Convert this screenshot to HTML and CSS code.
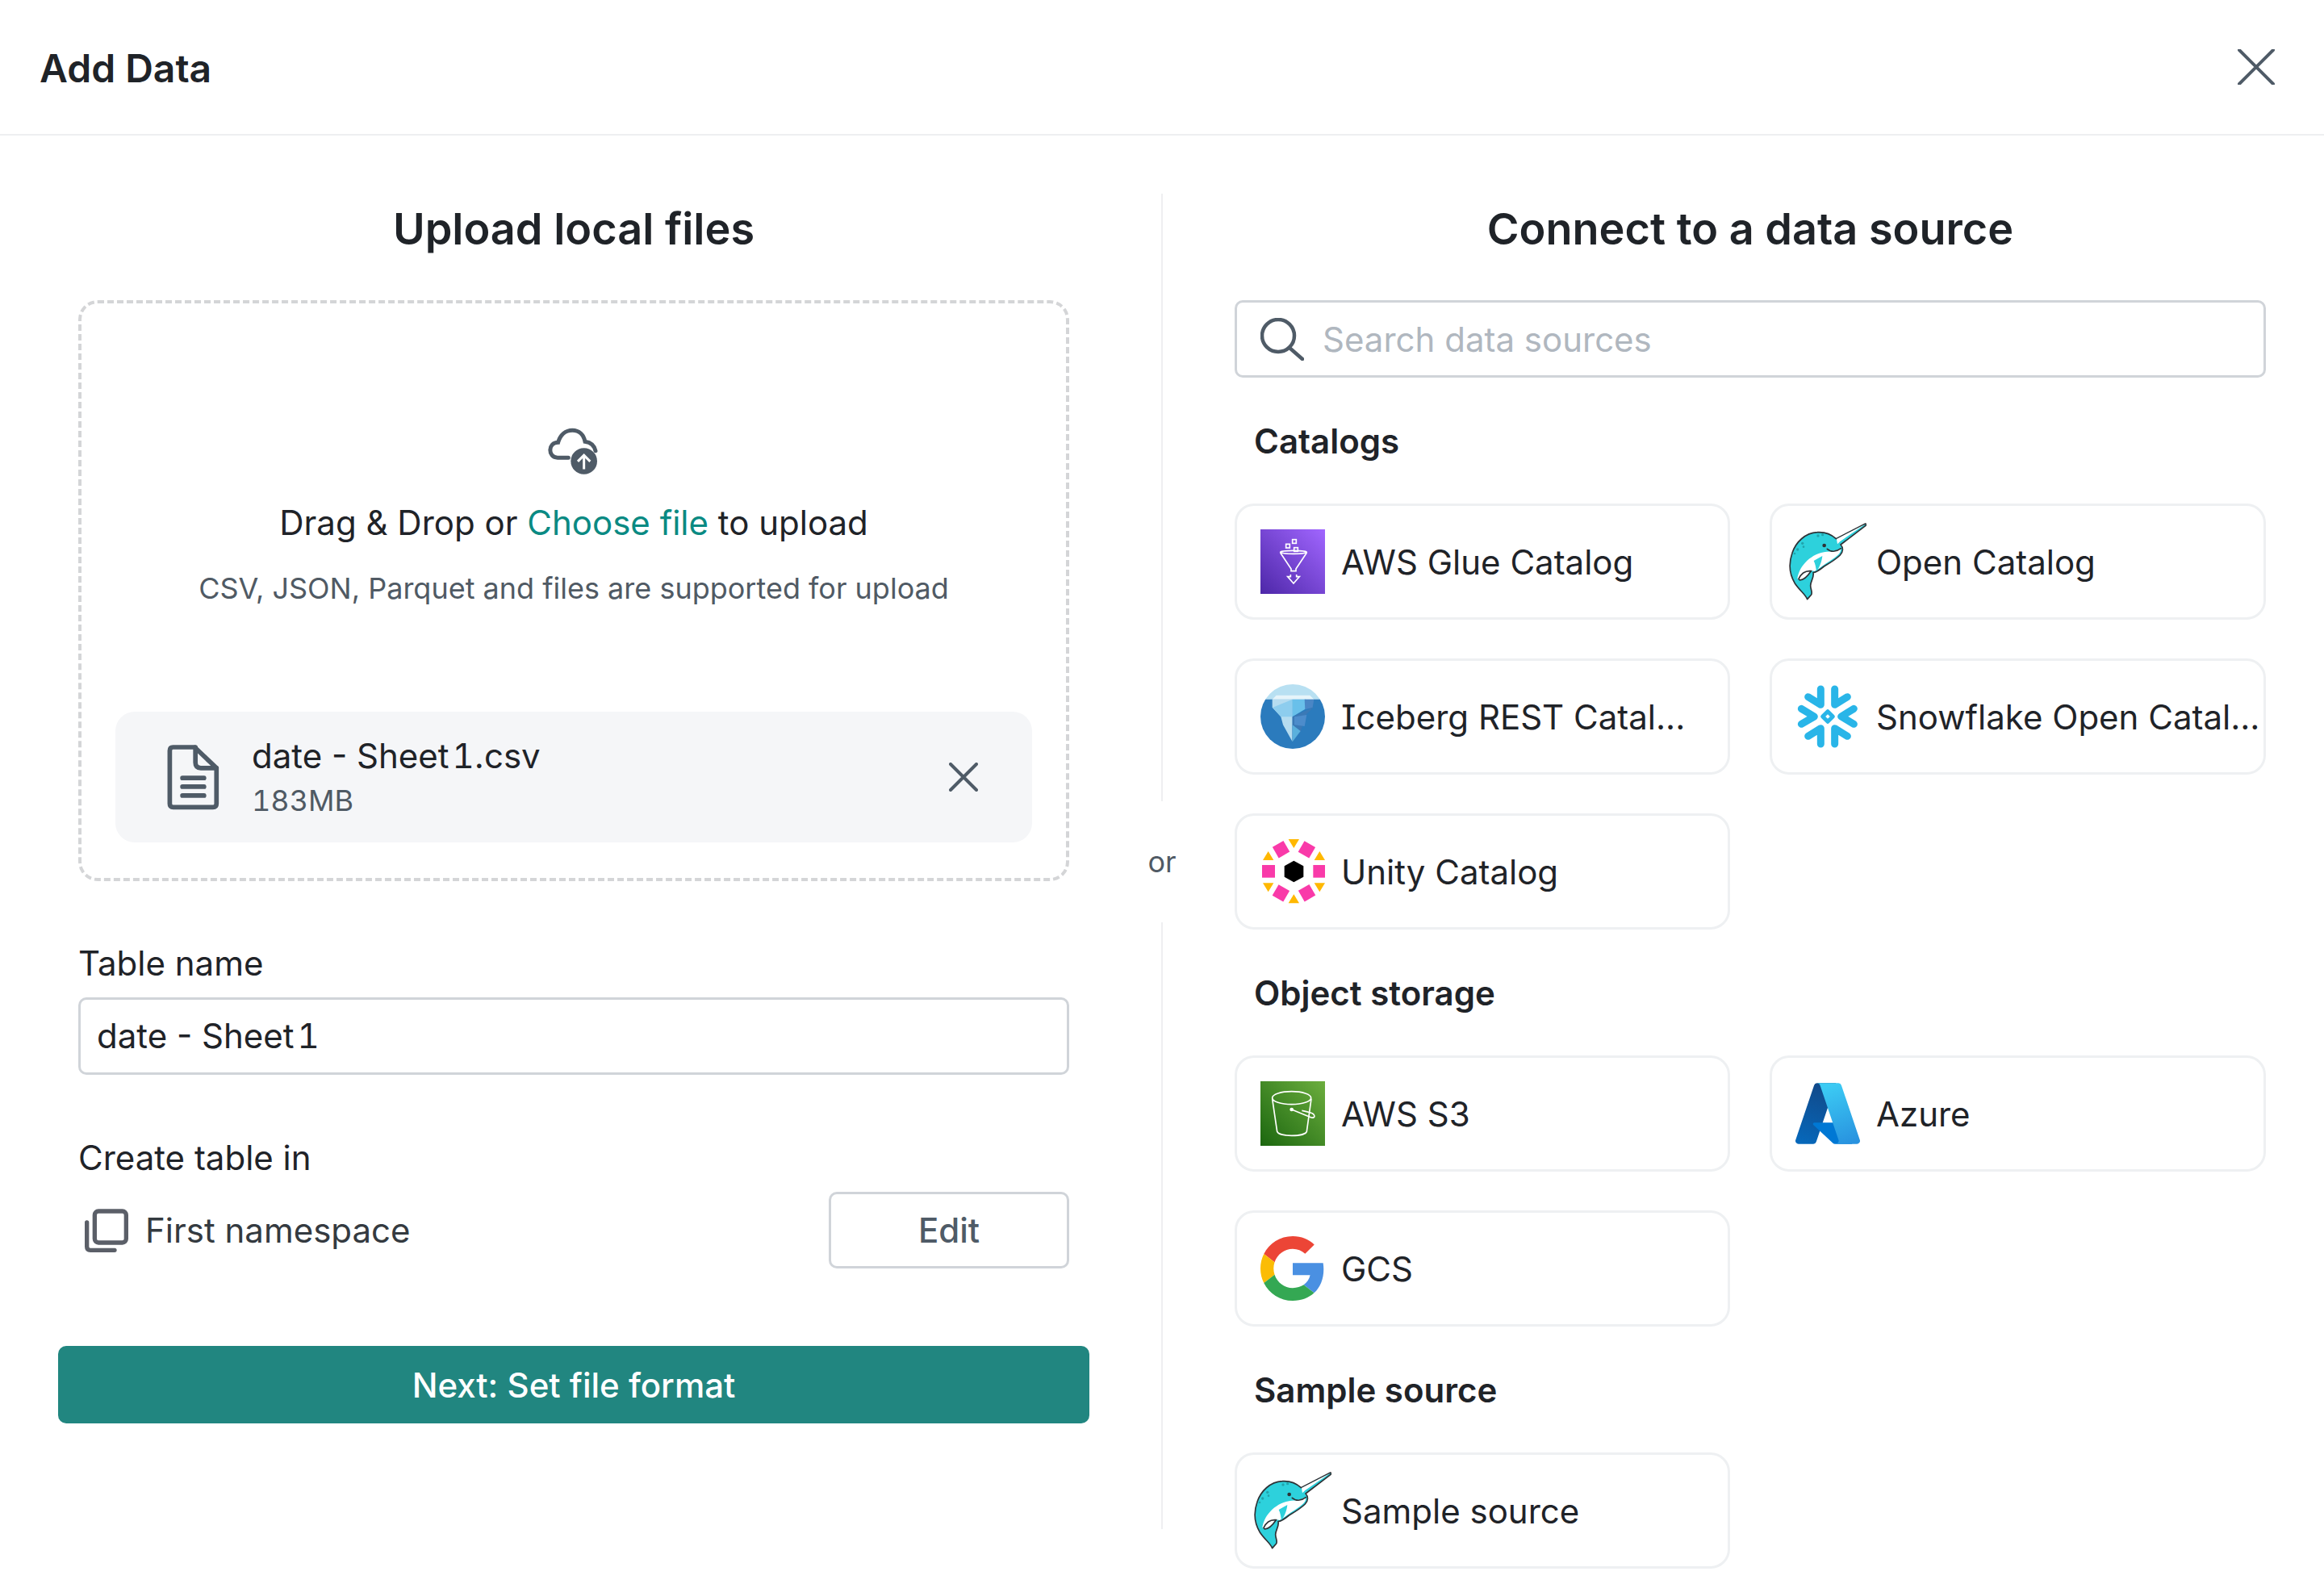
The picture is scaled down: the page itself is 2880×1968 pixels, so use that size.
FILE: index.html
```html
<!DOCTYPE html>
<html lang="en">

<head>
    <meta charset="UTF-8">
    <title>Add Data</title>
    <link rel="stylesheet" href="styles.css">
</head>

<body>
    <header class="top">
        <h1>Add Data</h1>
        <svg class="close" viewBox="0 0 46 44"><path d="M2 1 L44 43 M44 1 L2 43"/></svg>
    </header>

    <main class="main">
        <section class="upload">
            <h2>Upload local files</h2>
            <div class="drop">
                <svg class="cloud" viewBox="110 80 210 200">
                    <path class="cloud-line" d="M195 200 H155 C118 200 118 143 157 143 C165 115 185 98 210 98 C235 98 252 115 257 140 C278 143 292 155 296 175"/>
                    <circle cx="253" cy="213" r="49" fill="#4f5b67"/>
                    <path class="cloud-arrow" d="M253 243 V193 M230 214 L253 191 L276 214"/>
                </svg>
                <p class="drag">Drag &amp; Drop or <a>Choose file</a> to upload</p>
                <p class="hint">CSV, JSON, Parquet and files are supported for upload</p>
                <div class="file">
                    <svg class="file-icon" viewBox="80 60 200 260">
                        <path d="M105 78 H185 L266 155 V287 Q266 300 253 300 H106 Q93 300 93 287 V91 Q93 78 105 78 Z"/>
                        <path d="M188 78 V135 Q188 155 208 155 H266"/>
                        <path d="M140 192 H220 M140 224 H220 M140 257 H220"/>
                    </svg>
                    <div class="file-text">
                        <div class="file-name">date - Sheet<span class="one">1</span>.csv</div>
                        <div class="file-size num">183MB</div>
                    </div>
                    <svg class="file-x" viewBox="0 0 36 36"><path d="M2 2 L34 34 M34 2 L2 34"/></svg>
                </div>
            </div>

            <label class="field-label first">Table name</label>
            <div class="text-input">date - Sheet<span class="one">1</span></div>

            <label class="field-label second">Create table in</label>
            <div class="namespace">
                <svg class="ns-icon" viewBox="70 100 180 180">
                    <rect x="113" y="118" width="117" height="117" rx="14"/>
                    <path d="M84 160 V250 Q84 263 97 263 H187"/>
                </svg>
                <span class="ns-name">First namespace</span>
                <button class="edit">Edit</button>
            </div>

            <button class="next">Next: Set file format</button>
        </section>

        <div class="divider">
            <div class="line"></div>
            <div class="or">or</div>
            <div class="line"></div>
        </div>

        <section class="sources">
            <h2>Connect to a data source</h2>
            <div class="search">
                <svg class="search-icon" viewBox="0 0 54 53">
                    <circle cx="22" cy="22" r="20"/>
                    <path d="M36 37 L52 51"/>
                </svg>
                <input type="text" placeholder="Search data sources">
            </div>

            <h3 class="group-title">Catalogs</h3>
            <div class="cards">
                <div class="card">
                    <div class="logo">
                        <svg viewBox="186 108 240 240">
                            <defs>
                                <linearGradient id="glue" x1="0" y1="1" x2="1" y2="0">
                                    <stop offset="0" stop-color="#4d27a8"/>
                                    <stop offset="1" stop-color="#a166ff"/>
                                </linearGradient>
                            </defs>
                            <rect x="186" y="108" width="240" height="240" fill="url(#glue)"/>
                            <g fill="none" stroke="#fff" stroke-width="5">
                                <rect x="305" y="146" width="14" height="14"/>
                                <rect x="281" y="163" width="14" height="14"/>
                                <rect x="311" y="176" width="14" height="14"/>
                                <ellipse cx="309" cy="193" rx="49" ry="6"/>
                                <path d="M260 195 L300 255 V263 H318 V255 L358 195"/>
                                <path d="M298 276 V284 H287 L309 309 L331 284 H320 V276"/>
                            </g>
                        </svg>
                    </div>
                    <span class="card-name">AWS Glue Catalog</span>
                </div>
                <div class="card">
                    <div class="logo">
                        <svg class="narwhal" viewBox="110 83 288 288">
                            <path fill="#2dd1dc" stroke="#2e3236" stroke-width="5" stroke-linejoin="round" d="M285 142 L394 86 Q400 88 395 93 L302 164 C312 175 312 190 300 203 C285 218 262 232 240 245 C228 255 215 265 200 268 C204 285 190 300 190 316 C190 330 198 340 193 350 L178 367 C172 350 150 335 132 308 C112 275 108 235 122 195 C135 155 170 120 215 118 C245 116 270 128 285 142 Z"/>
                            <path fill="#fff" d="M141 290 C148 240 195 195 250 190 C268 190 285 186 302 178 C305 195 290 205 262 225 C240 238 225 252 205 263 C185 258 165 268 150 295 Z"/>
                            <path fill="#2dd1dc" d="M202 224 L234 206 C232 225 226 245 212 263 C210 250 208 235 202 224 Z"/>
                            <path fill="#fff" stroke="#2e3236" stroke-width="5" d="M146 291 C155 272 172 260 192 262 C180 280 165 295 150 296 Z"/>
                            <path fill="none" stroke="#2e3236" stroke-width="5" stroke-linecap="round" d="M252 180 C265 192 285 192 303 178"/>
                            <path fill="#fff" d="M287 143 L392 89 L300 152 L290 162 Z"/>
                            <circle cx="241" cy="167" r="7" fill="#2e3236"/>
                            <g fill="#22a3ac">
                                <circle cx="218" cy="131" r="5"/>
                                <circle cx="235" cy="127" r="5"/>
                                <circle cx="160" cy="159" r="5"/>
                                <circle cx="164" cy="172" r="4"/>
                                <circle cx="142" cy="182" r="5"/>
                                <circle cx="131" cy="197" r="4"/>
                            </g>
                        </svg>
                    </div>
                    <span class="card-name">Open Catalog</span>
                </div>
                <div class="card">
                    <div class="logo">
                        <svg viewBox="186 84 240 240">
                            <clipPath id="round"><circle cx="306" cy="204" r="120"/></clipPath>
                            <g clip-path="url(#round)">
                                <rect x="186" y="84" width="240" height="56" fill="#b8e0f2"/>
                                <rect x="186" y="140" width="240" height="184" fill="#2b7bbd"/>
                                <path fill="#e6f4fa" d="M245 125 H370 L385 140 H230 Z"/>
                                <path fill="#b5dcf0" d="M230 140 H305 V298 L270 235 L262 205 L230 170 Z"/>
                                <path fill="#8dcdee" d="M232 170 L305 140 V205 L262 205 Z"/>
                                <path fill="#69c0ea" d="M305 140 H355 V175 L305 205 Z"/>
                                <path fill="#4a86c5" d="M350 140 H385 L380 170 L352 178 Z"/>
                                <path fill="#3b79b6" d="M305 205 L385 168 L355 198 L335 260 L305 298 Z"/>
                                <path fill="#4d8ccb" d="M312 205 L358 198 L350 240 L312 235 Z"/>
                                <path fill="#5ab0dd" d="M305 235 L335 258 L305 298 Z"/>
                            </g>
                        </svg>
                    </div>
                    <span class="card-name">Iceberg REST Catal...</span>
                </div>
                <div class="card">
                    <div class="logo">
                        <svg viewBox="135 84 240 240">
                            <g fill="none" stroke="#29b5e8" stroke-width="27" stroke-linecap="round" stroke-linejoin="round">
                                <path d="M229 102 V160 L182 131"/>
                                <path d="M281 102 V160 L328 131"/>
                                <path d="M229 306 V248 L182 277"/>
                                <path d="M281 306 V248 L328 277"/>
                                <path d="M157 175 L205 204 L157 232"/>
                                <path d="M352 175 L305 204 L352 232"/>
                            </g>
                            <path fill="none" stroke="#29b5e8" stroke-width="15" stroke-linejoin="round" d="M255 185 L274 204 L255 223 L236 204 Z"/>
                        </svg>
                    </div>
                    <span class="card-name">Snowflake Open Catal...</span>
                </div>
                <div class="card">
                    <div class="logo">
                        <svg viewBox="186 657 240 240">
                            <g fill="#f93aa9">
                                <rect x="192" y="753" width="48" height="47"/>
                                <rect x="382" y="753" width="48" height="47"/>
                                <rect x="239" y="672" width="47" height="47" transform="rotate(-30 262 695)"/>
                                <rect x="335" y="672" width="47" height="47" transform="rotate(30 358 695)"/>
                                <rect x="239" y="834" width="47" height="47" transform="rotate(30 262 857)"/>
                                <rect x="335" y="834" width="47" height="47" transform="rotate(-30 358 857)"/>
                            </g>
                            <g fill="#ffb800">
                                <path d="M290 657 H330 L310 690 Z"/>
                                <path d="M290 895 H330 L310 862 Z"/>
                                <path d="M195 735 H235 L215 702 Z"/>
                                <path d="M386 735 H426 L406 702 Z"/>
                                <path d="M195 820 H235 L215 853 Z"/>
                                <path d="M386 820 H426 L406 853 Z"/>
                            </g>
                            <path d="M310 737 L346 757 V797 L310 817 L275 797 V757 Z"/>
                        </svg>
                    </div>
                    <span class="card-name">Unity Catalog</span>
                </div>
            </div>

            <h3 class="group-title">Object storage</h3>
            <div class="cards">
                <div class="card">
                    <div class="logo">
                        <svg viewBox="186 90 240 240">
                            <defs>
                                <linearGradient id="s3" x1="0" y1="1" x2="1" y2="0">
                                    <stop offset="0" stop-color="#1b660f"/>
                                    <stop offset="1" stop-color="#6cae3e"/>
                                </linearGradient>
                            </defs>
                            <rect x="186" y="90" width="240" height="240" fill="url(#s3)"/>
                            <g fill="none" stroke="#fff" stroke-width="5">
                                <ellipse cx="302" cy="152" rx="72" ry="24"/>
                                <path d="M230 155 L248 277 C255 297 350 297 358 277 L375 155"/>
                                <path d="M302 195 L375 225 C392 228 390 212 372 207 C362 204 345 199 340 199"/>
                            </g>
                            <circle cx="302" cy="195" r="7" fill="#fff"/>
                        </svg>
                    </div>
                    <span class="card-name">AWS S3</span>
                </div>
                <div class="card">
                    <div class="logo">
                        <svg viewBox="4 4 88 88">
                            <defs>
                                <linearGradient id="az-a" x1="42.83" y1="12.69" x2="15.79" y2="92.57" gradientUnits="userSpaceOnUse">
                                    <stop offset="0" stop-color="#114a8b"/>
                                    <stop offset="1" stop-color="#0669bc"/>
                                </linearGradient>
                                <linearGradient id="az-b" x1="47.84" y1="10.36" x2="77.52" y2="89.44" gradientUnits="userSpaceOnUse">
                                    <stop offset="0" stop-color="#3ccbf4"/>
                                    <stop offset="1" stop-color="#2892df"/>
                                </linearGradient>
                            </defs>
                            <path fill="url(#az-a)" d="M33.338 6.544h26.038l-27.03 80.087a4.152 4.152 0 0 1-3.933 2.824H8.149a4.145 4.145 0 0 1-3.928-5.47L29.404 9.368a4.152 4.152 0 0 1 3.934-2.825z"/>
                            <path fill="#0078d4" d="M71.175 60.261h-41.29a1.911 1.911 0 0 0-1.305 3.309l26.532 24.764a4.171 4.171 0 0 0 2.846 1.121h23.38z"/>
                            <path fill="url(#az-b)" d="M66.595 9.364a4.145 4.145 0 0 0-3.928-2.82H33.648a4.146 4.146 0 0 1 3.928 2.82l25.184 74.62a4.146 4.146 0 0 1-3.928 5.472h29.02a4.146 4.146 0 0 0 3.927-5.472z"/>
                        </svg>
                    </div>
                    <span class="card-name">Azure</span>
                </div>
                <div class="card">
                    <div class="logo">
                        <svg viewBox="0 0 48 48">
                            <path fill="#ec4536" d="M24 9.5c3.54 0 6.71 1.22 9.21 3.6l6.85-6.85C35.9 2.38 30.47 0 24 0 14.62 0 6.51 5.38 2.56 13.22l7.98 6.19C12.43 13.72 17.74 9.5 24 9.5z"/>
                            <path fill="#4a90e2" d="M46.98 24.55c0-1.57-.15-3.09-.38-4.55H24v9.02h12.94c-.58 2.96-2.26 5.48-4.78 7.18l7.73 6c4.51-4.18 7.09-10.36 7.09-17.65z"/>
                            <path fill="#fbbc05" d="M10.53 28.59c-.48-1.45-.76-2.99-.76-4.59s.27-3.14.76-4.59l-7.98-6.19C.92 16.46 0 20.12 0 24c0 3.88.92 7.54 2.56 10.78l7.97-6.19z"/>
                            <path fill="#34a853" d="M24 48c6.48 0 11.93-2.13 15.89-5.81l-7.73-6c-2.15 1.45-4.92 2.3-8.16 2.3-6.26 0-11.57-4.22-13.47-9.91l-7.98 6.19C6.51 42.62 14.62 48 24 48z"/>
                        </svg>
                    </div>
                    <span class="card-name">GCS</span>
                </div>
            </div>

            <h3 class="group-title">Sample source</h3>
            <div class="cards">
                <div class="card">
                    <div class="logo">
                        <svg class="narwhal" viewBox="110 83 288 288">
                            <path fill="#2dd1dc" stroke="#2e3236" stroke-width="5" stroke-linejoin="round" d="M285 142 L394 86 Q400 88 395 93 L302 164 C312 175 312 190 300 203 C285 218 262 232 240 245 C228 255 215 265 200 268 C204 285 190 300 190 316 C190 330 198 340 193 350 L178 367 C172 350 150 335 132 308 C112 275 108 235 122 195 C135 155 170 120 215 118 C245 116 270 128 285 142 Z"/>
                            <path fill="#fff" d="M141 290 C148 240 195 195 250 190 C268 190 285 186 302 178 C305 195 290 205 262 225 C240 238 225 252 205 263 C185 258 165 268 150 295 Z"/>
                            <path fill="#2dd1dc" d="M202 224 L234 206 C232 225 226 245 212 263 C210 250 208 235 202 224 Z"/>
                            <path fill="#fff" stroke="#2e3236" stroke-width="5" d="M146 291 C155 272 172 260 192 262 C180 280 165 295 150 296 Z"/>
                            <path fill="none" stroke="#2e3236" stroke-width="5" stroke-linecap="round" d="M252 180 C265 192 285 192 303 178"/>
                            <path fill="#fff" d="M287 143 L392 89 L300 152 L290 162 Z"/>
                            <circle cx="241" cy="167" r="7" fill="#2e3236"/>
                            <g fill="#22a3ac">
                                <circle cx="218" cy="131" r="5"/>
                                <circle cx="235" cy="127" r="5"/>
                                <circle cx="160" cy="159" r="5"/>
                                <circle cx="164" cy="172" r="4"/>
                                <circle cx="142" cy="182" r="5"/>
                                <circle cx="131" cy="197" r="4"/>
                            </g>
                        </svg>
                    </div>
                    <span class="card-name">Sample source</span>
                </div>
            </div>
        </section>
    </main>
</body>

</html>
```
FILE: styles.css
```css
* {
    box-sizing: border-box;
}

body {
    margin: 0;
    background: #fff;
    color: #1f2328;
    font-family: Inter, "Noto Sans", sans-serif;
    font-feature-settings: "cv08";
    overflow: hidden;
}

h1,
h2,
h3,
p {
    margin: 0;
}

.num {
    font-variant-numeric: tabular-nums;
}

.one {
    margin-left: 4px;
    font-variant-numeric: tabular-nums;
}

.top {
    height: 168px;
    padding: 0 61px 0 49px;
    border-bottom: 2px solid #eeeff1;
    display: flex;
    align-items: center;
    justify-content: space-between;
}

.top h1 {
    margin-top: 2px;
    font-size: 48px;
    font-weight: 600;
}

.close {
    width: 46px;
    height: 44px;
    fill: none;
    stroke: #4f5b67;
    stroke-width: 4;
    stroke-linecap: round;
}

.main {
    display: flex;
    padding: 72px 72px 0 72px;
}

.upload {
    width: 1278px;
    display: flex;
    flex-direction: column;
    align-items: stretch;
}

.sources {
    width: 1278px;
}

h2 {
    height: 88px;
    line-height: 88px;
    margin-bottom: 44px;
    font-size: 54px;
    font-weight: 600;
    text-align: center;
}

.drop {
    margin: 0 25px;
    height: 720px;
    padding: 151px 42px 0;
    border: 4px dashed #d4d5d7;
    border-radius: 24px;
    text-align: center;
}

.cloud {
    display: block;
    width: 70px;
    height: 67px;
    margin: 0 auto;
    overflow: visible;
}

.cloud-line {
    fill: none;
    stroke: #4f5b67;
    stroke-width: 15;
    stroke-linecap: round;
}

.cloud-arrow {
    fill: none;
    stroke: #fff;
    stroke-width: 9;
}

.drag {
    margin-top: 21px;
    line-height: 66px;
    font-size: 42px;
}

.drag a {
    color: #0a8a83;
}

.hint {
    margin-top: 20px;
    line-height: 56px;
    font-size: 36px;
    color: #505a64;
}

.file {
    margin-top: 125px;
    height: 162px;
    padding: 0 67px 0 63px;
    background: #f5f6f8;
    border-radius: 24px;
    display: flex;
    align-items: center;
    text-align: left;
}

.file-icon {
    width: 67px;
    height: 87px;
    margin-right: 39px;
    fill: none;
    stroke: #4f5b67;
    stroke-width: 17;
    stroke-linecap: round;
    stroke-linejoin: round;
}

.file-text {
    flex: 1;
}

.file-name {
    line-height: 56px;
    font-size: 42px;
}

.file-size {
    margin-top: 1px;
    line-height: 52px;
    font-size: 36px;
    color: #505a64;
}

.file-x {
    width: 36px;
    height: 36px;
    fill: none;
    stroke: #4f5b67;
    stroke-width: 4;
    stroke-linecap: round;
}

.field-label {
    display: block;
    margin: 0 25px;
    line-height: 60px;
    font-size: 42px;
}

.field-label.first {
    margin-top: 72px;
    margin-bottom: 12px;
}

.field-label.second {
    margin-top: 73px;
    margin-bottom: 12px;
}

.text-input,
.search {
    height: 96px;
    border: 3px solid #d0d4d9;
    border-radius: 10px;
    background: #fff;
}

.text-input {
    margin: 0 25px;
    padding: 0 20px;
    line-height: 90px;
    font-size: 42px;
}

.namespace {
    margin: 0 25px;
    height: 95px;
    display: flex;
    align-items: center;
}

.ns-icon {
    width: 60px;
    height: 60px;
    margin: 0 17px 0 6px;
    fill: none;
    stroke: #5b5f68;
    stroke-width: 16;
    stroke-linecap: round;
}

.ns-name {
    flex: 1;
    font-size: 42px;
    color: #343a40;
}

.edit {
    width: 298px;
    height: 95px;
    border: 3px solid #d0d4d9;
    border-radius: 10px;
    background: #fff;
    color: #4f5b67;
    font: 500 42px Inter, "Noto Sans", sans-serif;
}

.next {
    margin-top: 96px;
    height: 96px;
    border: 0;
    border-radius: 10px;
    background: #218680;
    color: #fff;
    font: 500 42px Inter, "Noto Sans", sans-serif;
}

.divider {
    width: 180px;
    height: 1655px;
    display: flex;
    flex-direction: column;
    align-items: center;
}

.line {
    flex: 1;
    width: 2px;
    background: #eeeff1;
}

.or {
    height: 150px;
    line-height: 150px;
    font-size: 36px;
    color: #505a64;
}

.search {
    display: flex;
    align-items: center;
    padding-left: 29px;
}

.search-icon {
    width: 54px;
    height: 53px;
    margin-right: 21px;
    fill: none;
    stroke: #4f5b67;
    stroke-width: 4.5;
    stroke-linecap: round;
}

.search input {
    flex: 1;
    border: 0;
    outline: none;
    font: 42px Inter, "Noto Sans", sans-serif;
}

.search input::placeholder {
    color: #b0b7bf;
    opacity: 1;
}

.group-title {
    height: 60px;
    line-height: 60px;
    margin: 49px 0 47px 24px;
    font-size: 42px;
    font-weight: 600;
}

.cards {
    display: grid;
    grid-template-columns: 614px 615px;
    column-gap: 49px;
    row-gap: 48px;
}

.card {
    height: 144px;
    padding-left: 29px;
    border: 3px solid #eef0f2;
    border-radius: 24px;
    display: flex;
    align-items: center;
    white-space: nowrap;
}

.logo {
    flex: none;
    width: 80px;
    height: 80px;
    margin-right: 20px;
    display: flex;
    align-items: center;
    justify-content: center;
}

.logo svg {
    flex: none;
    display: block;
    width: 80px;
    height: 80px;
}

.logo .narwhal {
    width: 96px;
    height: 96px;
}

.card-name {
    font-size: 42px;
}
```
